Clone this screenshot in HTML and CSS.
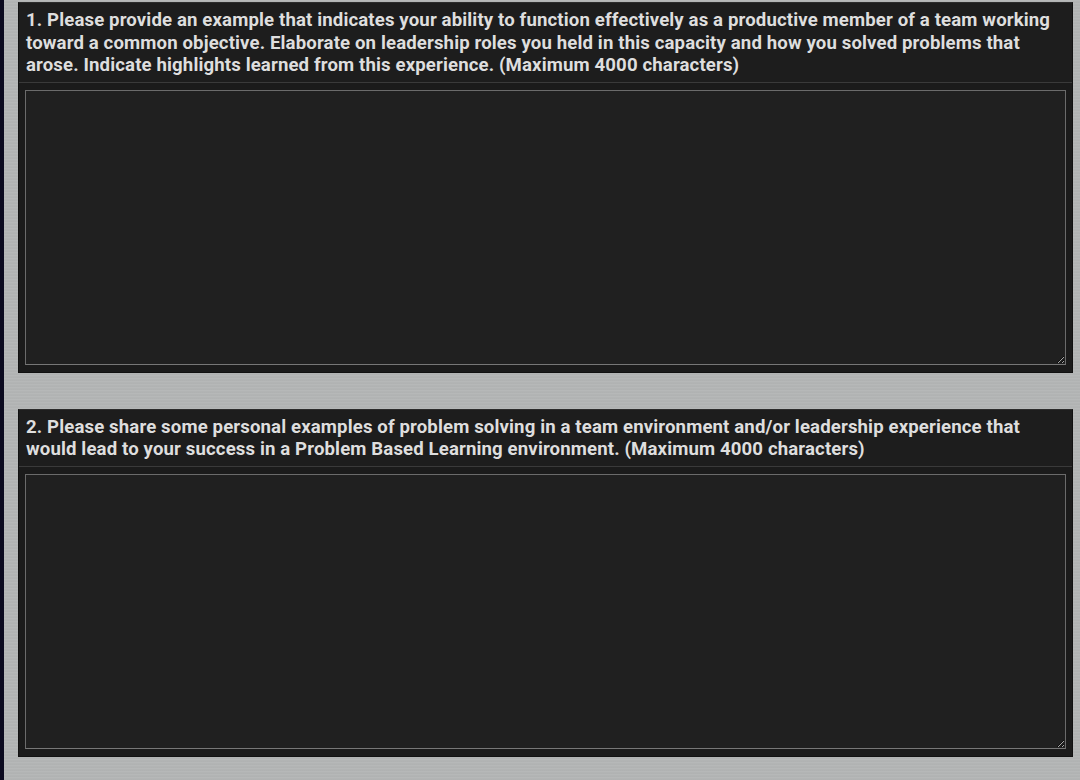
FILE: index.html
```html
<!DOCTYPE html>
<html lang="en">
<head>
<meta charset="utf-8">
<title>Application Essays</title>
<link rel="stylesheet" href="styles.css">
</head>
<body>
<div class="page">
  <section class="question">
    <div class="question-head">1. Please provide an example that indicates your ability to function effectively as a productive member of a team working toward a common objective. Elaborate on leadership roles you held in this capacity and how you solved problems that arose. Indicate highlights learned from this experience. (Maximum 4000 characters)</div>
    <div class="question-body">
      <textarea class="answer" aria-label="Answer 1"></textarea>
    </div>
  </section>
  <section class="question">
    <div class="question-head">2. Please share some personal examples of problem solving in a team environment and/or leadership experience that would lead to your success in a Problem Based Learning environment. (Maximum 4000 characters)</div>
    <div class="question-body">
      <textarea class="answer" aria-label="Answer 2"></textarea>
    </div>
  </section>
</div>
</body>
</html>
```
FILE: styles.css
```css
html, body {
  margin: 0;
  padding: 0;
  height: 100%;
}
body {
  background-color: #b3b5b5;
  background-image: repeating-linear-gradient(180deg, #b6b8b8 0px, #b6b8b8 1px, #aeb0b0 2px, #b3b5b5 3px);
  font-family: Roboto, "Liberation Sans", Arial, sans-serif;
}
.page {
  min-height: 780px;
  box-sizing: border-box;
  border-left: 4px solid #0b0a1f;
  padding: 2px 7px 0 14px;
  display: flex;
  flex-direction: column;
  gap: 36px;
}
.question {
  background: #1b1b1b;
  border: 1px solid #111;
  border-top-color: #2c2c2c;
}
.question-head {
  padding: 6px 7px 5px 7px;
  font-weight: 700;
  font-size: 18.6px;
  letter-spacing: 0.13px;
  line-height: 22.5px;
  color: #dedede;
  border-bottom: 1px solid #3a3a3a;
  background: #1d1d1d;
}
.question-body {
  padding: 7px 6px 7px 6px;
}
.answer {
  display: block;
  box-sizing: border-box;
  width: 100%;
  height: 275px;
  margin: 0;
  background: #202020;
  border: 1px solid #6b6b6b;
  border-bottom-color: #777;
  color: #e2e2e2;
  font-family: Roboto, "Liberation Sans", Arial, sans-serif;
  font-size: 15px;
  padding: 6px;
  resize: vertical;
  outline: none;
}
```
